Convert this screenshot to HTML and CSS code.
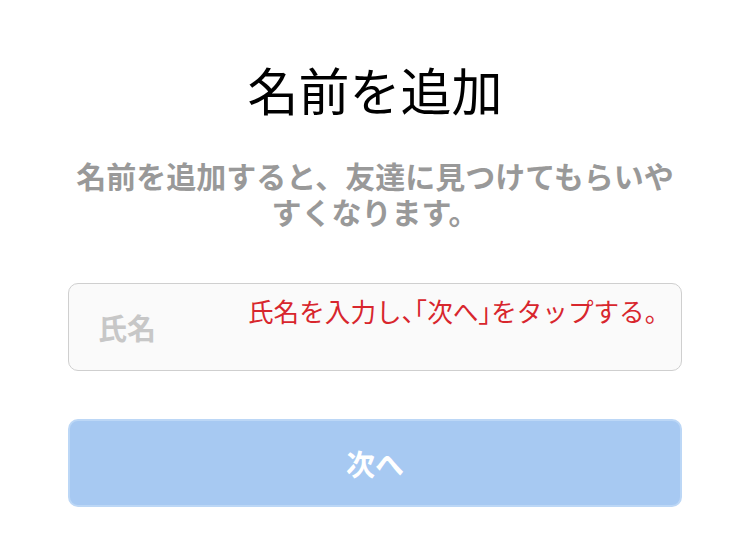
FILE: index.html
```html
<!DOCTYPE html>
<html lang="ja">
<head>
    <meta charset="UTF-8">
    <meta name="viewport" content="width=device-width, initial-scale=1.0">
    <title>名前を追加</title>
    <link rel="stylesheet" href="styles.css">
</head>
<body>
    <div class="page">
        <h1 class="title">名前を追加</h1>
        <p class="subtitle">名前を追加すると、友達に見つけてもらいやすくなります。</p>

        <!-- Name field with instruction note -->
        <div class="field">
            <input class="name-input" type="text" placeholder="氏名">
            <span class="note">氏名を入力し、「次へ」をタップする。</span>
        </div>

        <button class="next-btn" disabled>次へ</button>
    </div>
</body>
</html>
```

FILE: styles.css
```css
* {
    margin: 0;
    padding: 0;
    box-sizing: border-box;
}

body {
    font-family: 'Noto Sans CJK JP', 'Noto Sans', sans-serif;
    background: #fff;
    color: #000;
}

.page {
    width: 750px;
    padding: 59px 68px 0;
    display: flex;
    flex-direction: column;
}

.title {
    font-size: 51px;
    font-weight: normal;
    line-height: 60px;
    text-align: center;
}

.subtitle {
    margin-top: 38px;
    font-size: 30px;
    font-weight: bold;
    line-height: 36px;
    color: #999;
    text-align: center;
    padding: 0 4px;
}

.field {
    position: relative;
    margin-top: 54px;
}

.name-input {
    width: 100%;
    height: 88px;
    padding: 0 29px;
    border: 1px solid #cfcfcf;
    border-radius: 10px;
    background: #fafafa;
    font-family: inherit;
    font-size: 29px;
    font-weight: bold;
    color: #333;
    outline: none;
}

.name-input::placeholder {
    color: #c7c7c7;
}

/* instruction overlay */
.note {
    position: absolute;
    top: 11px;
    left: 180px;
    font-size: 25.6px;
    line-height: 34px;
    color: #d8262d;
    font-feature-settings: "halt";
}

.next-btn {
    margin-top: 48px;
    height: 88px;
    width: 100%;
    border: 2px solid #bcd7f6;
    border-radius: 10px;
    background: #a7c9f2;
    color: #fff;
    font-family: inherit;
    font-size: 29px;
    font-weight: bold;
}
```
